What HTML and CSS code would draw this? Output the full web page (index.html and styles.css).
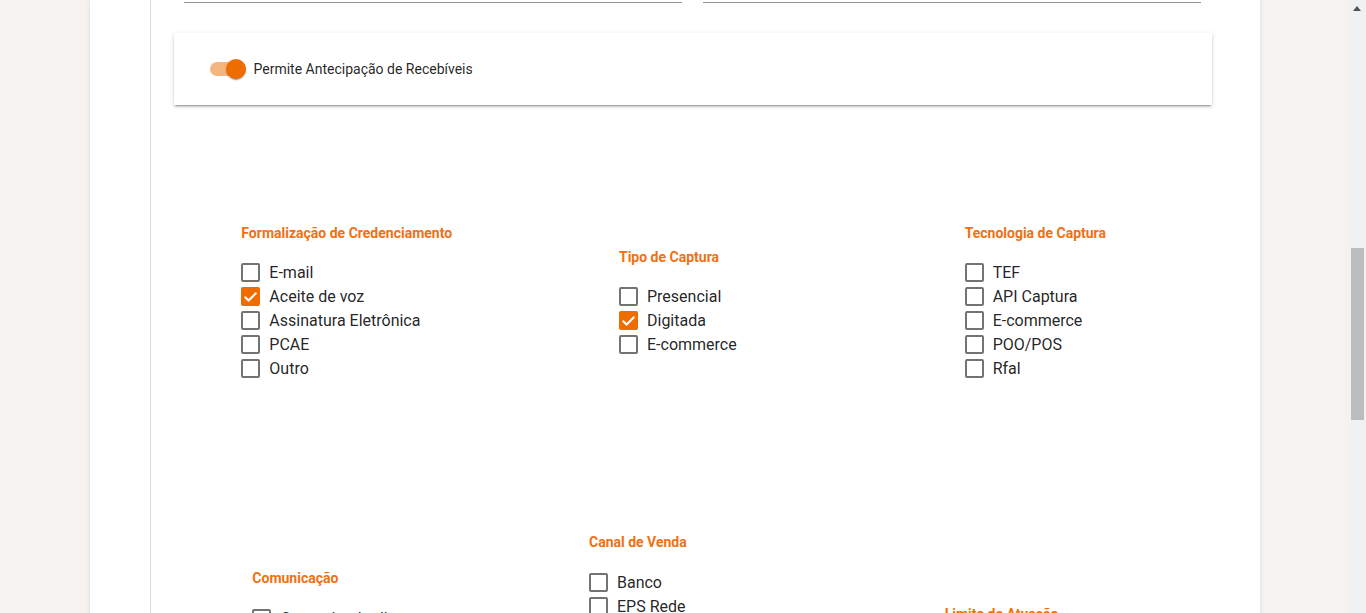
FILE: index.html
```html
<!DOCTYPE html>
<html lang="pt-BR">
<head>
<meta charset="utf-8">
<title>Credenciamento</title>
<link rel="stylesheet" href="styles.css">
</head>
<body>
<div class="viewport">
  <main class="panel">
    <div class="panel-inner">
      <div class="fields">
        <div class="field"></div>
        <div class="field"></div>
      </div>

      <section class="card">
        <label class="toggle">
          <span class="toggle-track"><span class="toggle-thumb"></span></span>
          <span class="toggle-label">Permite Antecipação de Recebíveis</span>
        </label>
      </section>

      <div class="group-row group-row-first">
        <div class="group group-formalizacao">
          <h3 class="group-title">Formalização de Credenciamento</h3>
          <div class="opt"><span class="box"></span><span>E-mail</span></div>
          <div class="opt"><span class="box checked"><svg viewBox="0 0 18 18"><path d="M3.5 9.2 L7.2 12.8 L14.6 5.4"/></svg></span><span>Aceite de voz</span></div>
          <div class="opt"><span class="box"></span><span>Assinatura Eletrônica</span></div>
          <div class="opt"><span class="box"></span><span>PCAE</span></div>
          <div class="opt"><span class="box"></span><span>Outro</span></div>
        </div>
        <div class="group group-narrow">
          <h3 class="group-title">Tipo de Captura</h3>
          <div class="opt"><span class="box"></span><span>Presencial</span></div>
          <div class="opt"><span class="box checked"><svg viewBox="0 0 18 18"><path d="M3.5 9.2 L7.2 12.8 L14.6 5.4"/></svg></span><span>Digitada</span></div>
          <div class="opt"><span class="box"></span><span>E-commerce</span></div>
        </div>
        <div class="group group-narrow">
          <h3 class="group-title">Tecnologia de Captura</h3>
          <div class="opt"><span class="box"></span><span>TEF</span></div>
          <div class="opt"><span class="box"></span><span>API Captura</span></div>
          <div class="opt"><span class="box"></span><span>E-commerce</span></div>
          <div class="opt"><span class="box"></span><span>POO/POS</span></div>
          <div class="opt"><span class="box"></span><span>Rfal</span></div>
        </div>
      </div>

      <div class="group-row">
        <div class="group group-comunicacao">
          <h3 class="group-title">Comunicação</h3>
          <div class="opt"><span class="box"></span><span>Comunicado direto</span></div>
          <div class="opt"><span class="box"></span><span>E-mail</span></div>
          <div class="opt"><span class="box"></span><span>SMS</span></div>
          <div class="opt"><span class="box"></span><span>Telefone</span></div>
          <div class="opt"><span class="box"></span><span>Carta</span></div>
        </div>
        <div class="group group-canal">
          <h3 class="group-title">Canal de Venda</h3>
          <div class="opt"><span class="box"></span><span>Banco</span></div>
          <div class="opt"><span class="box"></span><span>EPS Rede</span></div>
          <div class="opt"><span class="box"></span><span>Agência</span></div>
          <div class="opt"><span class="box"></span><span>Parceiro</span></div>
          <div class="opt"><span class="box"></span><span>Site</span></div>
          <div class="opt"><span class="box"></span><span>Televendas</span></div>
          <div class="opt"><span class="box"></span><span>Subcredenciador</span></div>
          <div class="opt"><span class="box"></span><span>Outro</span></div>
        </div>
        <div class="group group-limite">
          <h3 class="group-title">Limite de Atuação</h3>
          <div class="opt"><span class="box"></span><span>Nacional</span></div>
          <div class="opt"><span class="box"></span><span>Regional</span></div>
        </div>
      </div>
    </div>
  </main>
</div>

<div class="scrollbar">
  <span class="scroll-arrow"></span>
  <span class="scroll-thumb"></span>
</div>
</body>
</html>
```

FILE: styles.css
```css
html, body {
  margin: 0;
  padding: 0;
  overflow: hidden;
  background: #f5f2ef;
  font-family: Roboto, "Liberation Sans", Arial, sans-serif;
}

.viewport {
  width: 1349px;
}

.panel {
  width: 1170px;
  margin: 0 auto;
  background: #fff;
  box-shadow: 0 0 4px rgba(0, 0, 0, 0.12);
  padding-left: 60px;
  box-sizing: border-box;
  min-height: 900px;
}

.panel-inner {
  border-left: 1px solid #dedede;
  padding: 0 48px 0 23px;
  min-height: 900px;
}

.fields {
  display: grid;
  grid-template-columns: 498px 498px;
  column-gap: 21px;
  padding: 0 11px 0 10px;
}

.field {
  height: 2px;
  border-bottom: 1px solid #959595;
}

.card {
  margin-top: 30px;
  height: 72px;
  background: #fff;
  display: flex;
  align-items: center;
  padding-left: 36px;
  box-shadow: 0 2px 2px rgba(0, 0, 0, 0.14), 0 3px 1px -2px rgba(0, 0, 0, 0.2), 0 1px 5px rgba(0, 0, 0, 0.12);
}

.toggle {
  display: flex;
  align-items: center;
}

.toggle-track {
  position: relative;
  width: 36px;
  height: 14px;
  border-radius: 8px;
  background: #f5b57f;
}

.toggle-thumb {
  position: absolute;
  right: 0;
  top: -3px;
  width: 20px;
  height: 20px;
  border-radius: 50%;
  background: #ef6c00;
  box-shadow: 0 2px 1px -1px rgba(0, 0, 0, 0.2), 0 1px 1px 0 rgba(0, 0, 0, 0.14), 0 1px 3px 0 rgba(0, 0, 0, 0.12);
}

.toggle-label {
  margin-left: 8px;
  font-size: 14px;
  color: rgba(0, 0, 0, 0.87);
}

.group-row {
  display: grid;
  grid-template-columns: 1fr 1fr 1fr;
  height: 346px;
  padding-left: 1px;
  align-items: center;
  justify-items: center;
}

.group-row-first {
  margin-top: 24px;
  height: 345px;
}

.group {
  display: flex;
  flex-direction: column;
}

.group-formalizacao { width: 212px; }
.group-narrow { width: 148px; }
.group-comunicacao { width: 190px; }
.group-canal { width: 208px; }
.group-limite { width: 188px; }

.group-title {
  margin: 0 0 18px;
  font-size: 14px;
  line-height: 20px;
  font-weight: 700;
  color: #f2700f;
  white-space: nowrap;
}

.opt {
  height: 24px;
  display: flex;
  align-items: center;
  font-size: 16px;
  color: rgba(0, 0, 0, 0.87);
  white-space: nowrap;
}

.box {
  width: 19px;
  height: 19px;
  box-sizing: border-box;
  border: 2px solid #737373;
  border-radius: 2px;
  margin-right: 9px;
  flex: none;
  display: flex;
  align-items: center;
  justify-content: center;
}

.box.checked {
  border: none;
  background: #ef6c00;
}

.box svg {
  width: 19px;
  height: 19px;
}

.box svg path {
  fill: none;
  stroke: #fff;
  stroke-width: 2;
}

.scrollbar {
  position: fixed;
  top: 0;
  right: 0;
  width: 17px;
  height: 100%;
  background: #f1f1f1;
}

.scroll-arrow {
  position: absolute;
  top: 6px;
  left: 4px;
  width: 0;
  height: 0;
  border-left: 4px solid transparent;
  border-right: 4px solid transparent;
  border-bottom: 5px solid #505050;
}

.scroll-thumb {
  position: absolute;
  top: 248px;
  left: 2px;
  width: 13px;
  height: 172px;
  background: #bcbcbc;
}
```
